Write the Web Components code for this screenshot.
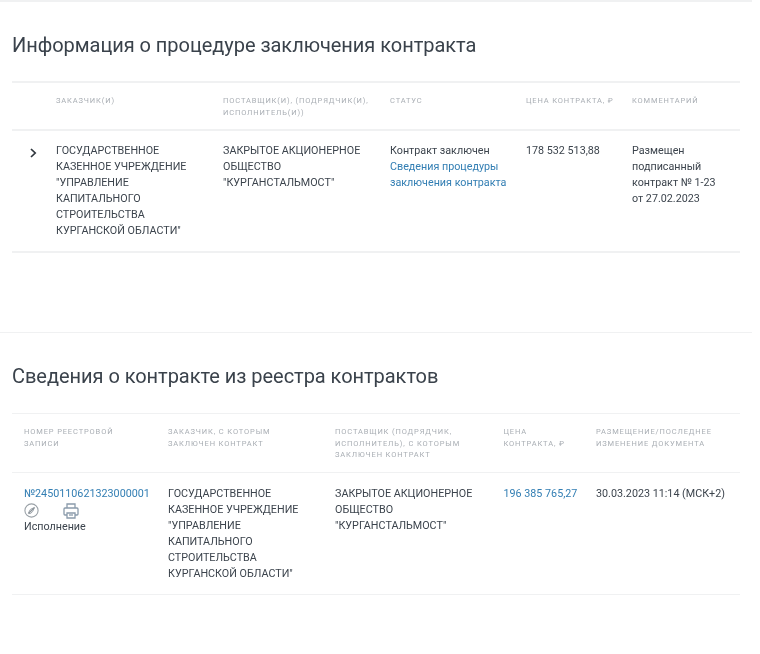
<!DOCTYPE html>
<html lang="ru"><head><meta charset="utf-8"><title>Контракт</title>
<style>
html,body{margin:0;padding:0;background:#fff}
body{width:760px;height:654px;overflow:hidden;font-family:Roboto,"Liberation Sans",sans-serif;color:#3d4650}
sec-block{filter:blur(.4px)}
</style></head><body>
<template id="sec-t"><style>
:host{display:block;box-sizing:border-box;width:752px;padding:0 12px 0 12px;border-top:var(--top,2px) solid #f0f1f2}
h2{margin:0;font:400 20px/28px Roboto,"Liberation Sans",sans-serif;letter-spacing:-.04px;color:#3a424b;padding-top:var(--title-pad,29px);padding-bottom:var(--title-bot,23px)}
.tbl{width:728px}
</style><h2><slot name="title"></slot></h2><div class="tbl"><slot></slot></div></template>

<template id="row-t"><style>
:host{display:grid;box-sizing:border-box;grid-template-columns:var(--cols);border-top:var(--line,2px) solid #f0f1f2;height:var(--h);padding-top:var(--pt);padding-left:var(--pl,0);align-items:start}
:host([last]){border-bottom:2px solid #f0f1f2}
</style><slot></slot></template>

<template id="hc-t"><style>
:host{display:block;font:400 7.5px/11.5px Roboto,"Liberation Sans",sans-serif;letter-spacing:.87px;text-transform:uppercase;color:#a9aeb4}
</style><slot></slot></template>

<template id="tc-t"><style>
:host{display:block;font:400 10.75px/16px Roboto,"Liberation Sans",sans-serif;color:#3c444d}
</style><slot></slot></template>

<template id="lnk-t"><style>
:host{display:inline;color:#327eb3}
</style><slot></slot></template>

<template id="chev-t"><style>
:host{display:block;padding:5px 0 0 18px;line-height:0}
</style><svg width="7" height="10" viewBox="0 0 7 10"><path d="M1 1l4.2 4L1 9" fill="none" stroke="#2f363d" stroke-width="1.7"/></svg></template>

<template id="icons-t"><style>
:host{display:flex;gap:24px;align-items:center;height:17px;margin:0}
svg{display:block}
</style>
<svg width="15" height="15" viewBox="0 0 15 15" fill="none"><circle cx="7.5" cy="7.5" r="6.6" stroke="#9aa1a7" stroke-width="1.1"/><path d="M10.6 4.4L8.6 8.6 6.4 10.6 4.4 10.6 4.4 10 6.4 6.4z" fill="none" stroke="#9aa1a7" stroke-width="1"/><path d="M5 10l5-5" stroke="#8d959c" stroke-width="1.2"/></svg>
<svg width="16" height="16" viewBox="0 0 16 16" fill="none" stroke="#8a9bab" stroke-width="1.3"><path d="M4 5V1h8v4"/><rect x="1" y="5" width="14" height="7" rx="1"/><path d="M4 10h8v5H4z" fill="#fff"/><path d="M6 12h4"/></svg></template>

<sec-block style="--top:2px;--title-pad:29px;--title-bot:22px">
<span slot="title">Информация о процедуре заключения контракта</span>
<t-row style="--cols:44px 167px 167px 136px 106px 108px;--h:48px;--pt:12px">
<span></span><h-cell>Заказчик(и)</h-cell><h-cell>Поставщик(и), (подрядчик(и), исполнитель(и))</h-cell><h-cell>Статус</h-cell><h-cell>Цена контракта, ₽</h-cell><h-cell>Комментарий</h-cell>
</t-row>
<t-row last style="--cols:44px 167px 167px 136px 106px 108px;--h:124px;--pt:12px">
<chev-icon></chev-icon>
<t-cell>ГОСУДАРСТВЕННОЕ<br>КАЗЕННОЕ УЧРЕЖДЕНИЕ<br>"УПРАВЛЕНИЕ<br>КАПИТАЛЬНОГО<br>СТРОИТЕЛЬСТВА<br>КУРГАНСКОЙ ОБЛАСТИ"</t-cell>
<t-cell>ЗАКРЫТОЕ АКЦИОНЕРНОЕ<br>ОБЩЕСТВО<br>"КУРГАНСТАЛЬМОСТ"</t-cell>
<t-cell>Контракт заключен<br><t-link>Сведения процедуры<br>заключения контракта</t-link></t-cell>
<t-cell>178 532 513,88</t-cell>
<t-cell>Размещен<br>подписанный<br>контракт № 1-23<br>от 27.02.2023</t-cell>
</t-row>
</sec-block>

<sec-block style="--top:1px;--title-pad:29px;--title-bot:23px;margin-top:79px">
<span slot="title">Сведения о контракте из реестра контрактов</span>
<t-row style="--cols:144px 167px 168.5px 92.5px 144px;--pl:12px;--h:59px;--pt:12px;--line:1px">
<h-cell>Номер реестровой<br>записи</h-cell><h-cell>Заказчик, с которым<br>заключен контракт</h-cell><h-cell>Поставщик (подрядчик,<br>исполнитель), с которым<br>заключен контракт</h-cell><h-cell>Цена<br>контракта, ₽</h-cell><h-cell>Размещение/последнее<br>изменение документа</h-cell>
</t-row>
<t-row style="--cols:144px 167px 168.5px 92.5px 144px;--pl:12px;--h:123px;--pt:13px;--line:1px;border-bottom:1px solid #f0f1f2">
<t-cell><t-link>№2450110621323000001</t-link><reg-icons></reg-icons>Исполнение</t-cell>
<t-cell>ГОСУДАРСТВЕННОЕ<br>КАЗЕННОЕ УЧРЕЖДЕНИЕ<br>"УПРАВЛЕНИЕ<br>КАПИТАЛЬНОГО<br>СТРОИТЕЛЬСТВА<br>КУРГАНСКОЙ ОБЛАСТИ"</t-cell>
<t-cell>ЗАКРЫТОЕ АКЦИОНЕРНОЕ<br>ОБЩЕСТВО<br>"КУРГАНСТАЛЬМОСТ"</t-cell>
<t-cell><t-link>196 385 765,27</t-link></t-cell>
<t-cell>30.03.2023 11:14 (МСК+2)</t-cell>
</t-row>
</sec-block>

<script>
const defs={'sec-block':'sec-t','t-row':'row-t','h-cell':'hc-t','t-cell':'tc-t','t-link':'lnk-t','chev-icon':'chev-t','reg-icons':'icons-t'};
for(const [name,id] of Object.entries(defs)){
  customElements.define(name,class extends HTMLElement{
    constructor(){super();this.attachShadow({mode:'open'}).appendChild(document.getElementById(id).content.cloneNode(true));}
  });
}
</script>
</body></html>
